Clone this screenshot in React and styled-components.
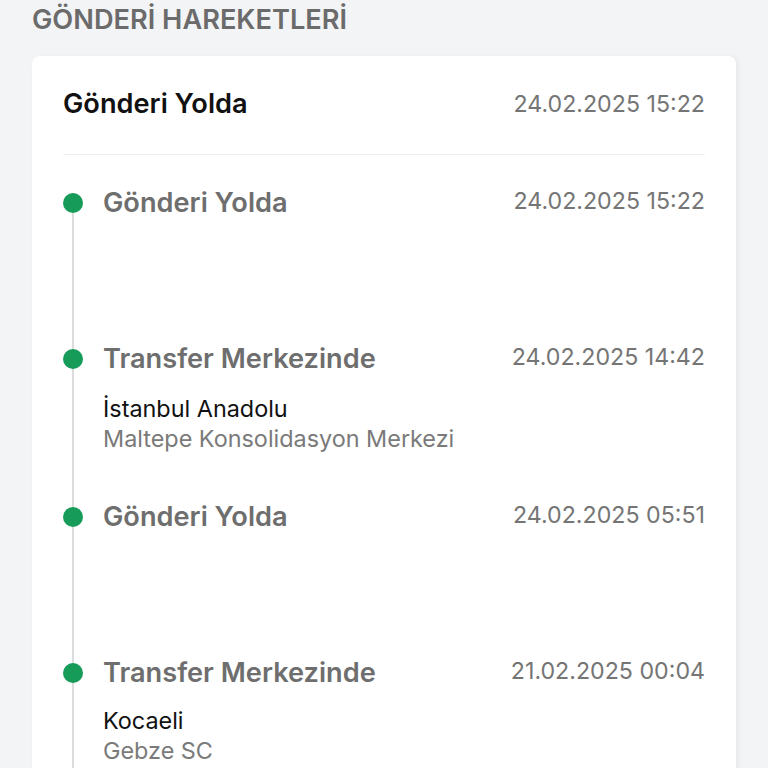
import React from 'react'
import styled, { createGlobalStyle } from 'styled-components'

const GlobalStyle = createGlobalStyle`
  body {
    margin: 0;
    background: #f3f4f6;
    font-family: Inter, "Noto Sans", "Liberation Sans", sans-serif;
  }
`

const Page = styled.div`
  padding: 4px 32px 0;
`

const SectionTitle = styled.h2`
  margin: 0 0 20px;
  font-size: 27.2px;
  line-height: 32px;
  font-weight: 600;
  color: #6b6b6b;
`

const Card = styled.div`
  background: #fff;
  border-radius: 8px;
  padding: 0 31px 40px;
  box-shadow: 3px 0 4px rgba(0, 0, 0, 0.04), 0 1px 2px rgba(0, 0, 0, 0.03);
`

const CardHeader = styled.div`
  display: flex;
  justify-content: space-between;
  align-items: center;
  padding: 32px 0 34px;
  border-bottom: 1px solid #f0f0f0;
`

const CurrentStatus = styled.div`
  font-size: 27.2px;
  line-height: 32px;
  font-weight: 600;
  color: #111;
`

const DateText = styled.div`
  font-size: 23.2px;
  line-height: 32px;
  color: #757575;
  margin-top: ${props => props.$offset || 0}px;
`

const Timeline = styled.ul`
  list-style: none;
  margin: 0;
  padding: 32px 0 0;
`

const Item = styled.li`
  display: grid;
  grid-template-columns: 20px 1fr auto;
  column-gap: 20px;
  min-height: ${props => props.$height}px;
`

const Rail = styled.div`
  background: linear-gradient(#dcdcdc, #dcdcdc) no-repeat;
  background-size: 2px 100%;
  background-position: center ${props => (props.$first ? '16px' : '0')};
`

const Dot = styled.span`
  display: block;
  width: 20px;
  height: 20px;
  margin-top: 6px;
  border-radius: 50%;
  background: #169c58;
`

const Body = styled.div`
  display: flex;
  flex-direction: column;
`

const StepTitle = styled.div`
  font-size: 27.2px;
  line-height: 32px;
  font-weight: 600;
  color: #6e6e6e;
`

const Location = styled.div`
  margin-top: ${props => props.$gap}px;
  font-size: 23.4px;
  line-height: 30px;
  color: #111;
`

const Branch = styled.div`
  font-size: 23.4px;
  line-height: 30px;
  color: #7a7a7a;
`

const steps = [
  { title: 'Gönderi Yolda', date: '24.02.2025 15:22', height: 156 },
  {
    title: 'Transfer Merkezinde',
    date: '24.02.2025 14:42',
    city: 'İstanbul Anadolu',
    branch: 'Maltepe Konsolidasyon Merkezi',
    gap: 19,
    height: 158
  },
  { title: 'Gönderi Yolda', date: '24.02.2025 05:51', height: 156 },
  {
    title: 'Transfer Merkezinde',
    date: '21.02.2025 00:04',
    city: 'Kocaeli',
    branch: 'Gebze SC',
    gap: 17,
    height: 156
  }
]

export default function App() {
  return (
    <>
      <GlobalStyle />
      <Page>
        <SectionTitle>GÖNDERİ HAREKETLERİ</SectionTitle>
        <Card>
          <CardHeader>
            <CurrentStatus>Gönderi Yolda</CurrentStatus>
            <DateText>24.02.2025 15:22</DateText>
          </CardHeader>
          <Timeline>
            {steps.map((step, i) => (
              <Item key={i} $height={step.height}>
                <Rail $first={i === 0}>
                  <Dot />
                </Rail>
                <Body>
                  <StepTitle>{step.title}</StepTitle>
                  {step.city && <Location $gap={step.gap}>{step.city}</Location>}
                  {step.branch && <Branch>{step.branch}</Branch>}
                </Body>
                <DateText $offset={-2}>{step.date}</DateText>
              </Item>
            ))}
          </Timeline>
        </Card>
      </Page>
    </>
  )
}
